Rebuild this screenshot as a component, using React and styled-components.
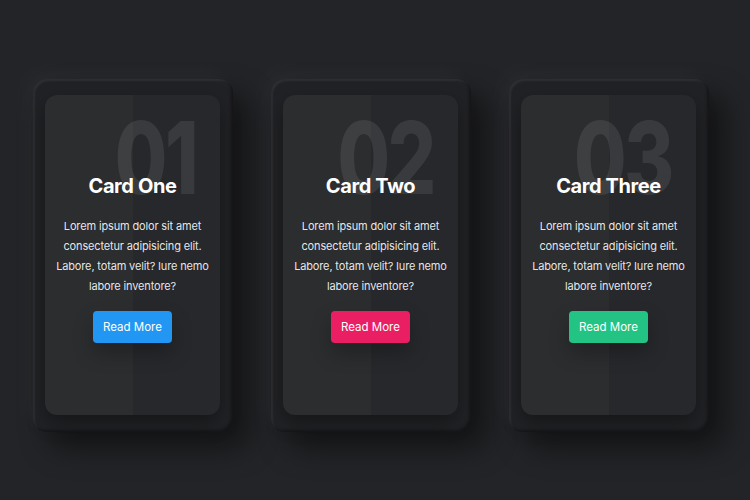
import styled, { createGlobalStyle } from 'styled-components';

const GlobalStyle = createGlobalStyle`
  html, body {
    margin: 0;
    padding: 0;
    background: #232427;
  }
  body {
    font-family: 'Inter', 'Liberation Sans', sans-serif;
  }
`;

const cards = [
  { num: '01', title: 'Card One', color: '#2196f3' },
  { num: '02', title: 'Card Two', color: '#e91e63' },
  { num: '03', title: 'Card Three', color: '#23c483' },
];

const App = () => {
  return (
    <>
      <GlobalStyle />
      <Page>
        {cards.map((card) => (
          <Card key={card.num}>
            <Box>
              <Number>{card.num}</Number>
              <Content>
                <Title>{card.title}</Title>
                <Text>
                  Lorem ipsum dolor sit amet consectetur adipisicing elit.
                  Labore, totam velit? Iure nemo labore inventore?
                </Text>
                <Button color={card.color}>Read More</Button>
              </Content>
            </Box>
          </Card>
        ))}
      </Page>
    </>
  );
};

export default App;

const Page = styled.div`
  display: flex;
  gap: 38px;
  width: 100%;
  height: 500px;
  padding: 79px 0 0 33px;
  box-sizing: border-box;
  background: #232427;
`;

const Card = styled.div`
  display: flex;
  width: 200px;
  height: 353px;
  padding: 16px 13px 17px 12px;
  box-sizing: border-box;
  border-radius: 14px;
  background: #212225;
  box-shadow: 16px 16px 30px rgba(0, 0, 0, 0.45),
    -8px -8px 20px rgba(255, 255, 255, 0.03),
    inset 2px 2px 2px rgba(255, 255, 255, 0.06),
    inset -2px -2px 3px rgba(0, 0, 0, 0.35);
`;

const Box = styled.div`
  position: relative;
  flex: 1;
  display: flex;
  align-items: center;
  justify-content: center;
  overflow: hidden;
  border-radius: 12px;
  background: #27282b;
  box-shadow: 0 8px 20px rgba(0, 0, 0, 0.35);

  &::before {
    content: '';
    position: absolute;
    top: 0;
    left: 0;
    width: 50%;
    height: 100%;
    background: rgba(255, 255, 255, 0.025);
  }
`;

const Number = styled.div`
  position: absolute;
  top: 13px;
  right: 24px;
  font-family: 'Inter', 'Liberation Sans', sans-serif;
  font-size: 100px;
  font-weight: 800;
  line-height: 1;
  letter-spacing: -3px;
  transform: scaleX(0.76);
  transform-origin: right center;
  color: rgba(255, 255, 255, 0.085);
`;

const Content = styled.div`
  position: relative;
  display: flex;
  flex-direction: column;
  align-items: center;
  margin-top: 6px;
  text-align: center;
`;

const Title = styled.h2`
  margin: 0 0 18px;
  font-size: 20px;
  font-weight: 700;
  letter-spacing: -0.4px;
  color: #ffffff;
`;

const Text = styled.p`
  width: 156px;
  margin: 0 0 15px;
  font-size: 11px;
  line-height: 20px;
  letter-spacing: -0.15px;
  color: rgba(255, 255, 255, 0.9);
`;

const Button = styled.a`
  display: flex;
  align-items: center;
  justify-content: center;
  width: 79px;
  height: 32px;
  border-radius: 4px;
  background: ${({ color }) => color};
  box-shadow: 0 10px 20px rgba(0, 0, 0, 0.25);
  font-size: 11.5px;
  color: #ffffff;
  cursor: pointer;
`;
